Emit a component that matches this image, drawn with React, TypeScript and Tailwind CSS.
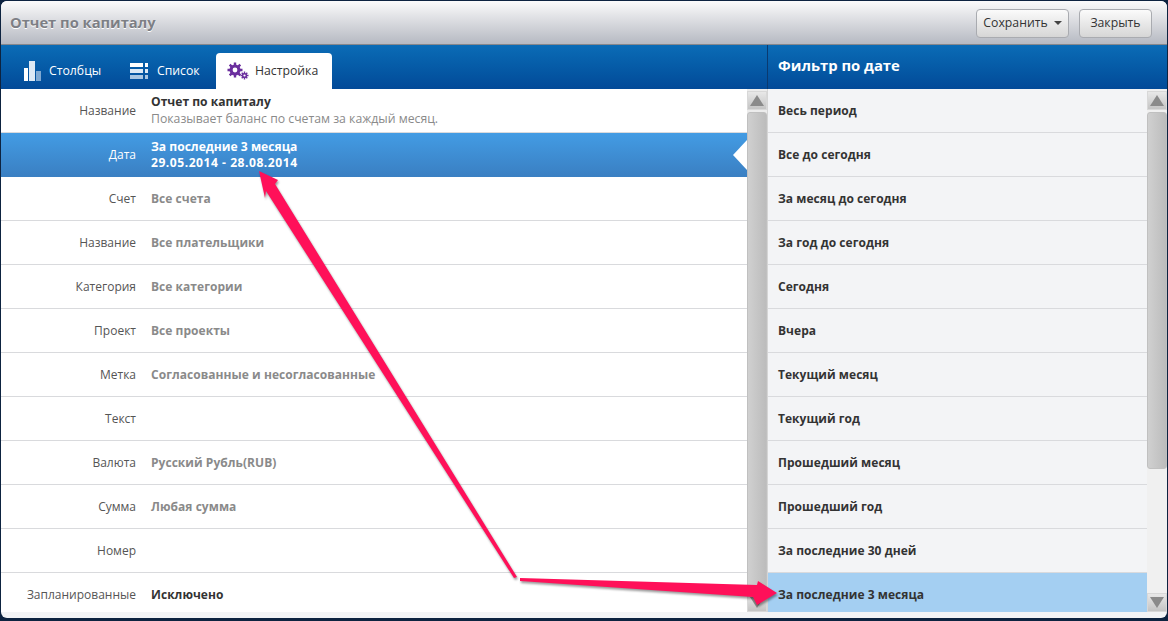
const leftRows = [
  { label: 'Счет', value: 'Все счета' },
  { label: 'Название', value: 'Все плательщики' },
  { label: 'Категория', value: 'Все категории' },
  { label: 'Проект', value: 'Все проекты' },
  { label: 'Метка', value: 'Согласованные и несогласованные' },
  { label: 'Текст', value: '' },
  { label: 'Валюта', value: 'Русский Рубль(RUB)' },
  { label: 'Сумма', value: 'Любая сумма' },
  { label: 'Номер', value: '' },
];

const rightRows = [
  'Весь период',
  'Все до сегодня',
  'За месяц до сегодня',
  'За год до сегодня',
  'Сегодня',
  'Вчера',
  'Текущий месяц',
  'Текущий год',
  'Прошедший месяц',
  'Прошедший год',
  'За последние 30 дней',
];

function ScrollArrow({ down }: { down?: boolean }) {
  return (
    <div className="h-[19px] flex items-center justify-center bg-gradient-to-b from-[#e8e8e8] to-[#c4c4c4] border border-[#d8d8d8]">
      <svg width="14" height="11" viewBox="0 0 14 11">
        <path d={down ? 'M0 0H14L7 11Z' : 'M7 0L14 11H0Z'} fill="#8a8a8a" />
      </svg>
    </div>
  );
}

function Gears() {
  return (
    <svg width="22" height="18" viewBox="0 0 22 18">
      <g fill="#6b2f9e">
        <circle cx="8" cy="8" r="5.5" />
        <g stroke="#6b2f9e" strokeWidth="2.4">
          <path d="M8 0.5V15.5M0.5 8H15.5M2.7 2.7L13.3 13.3M13.3 2.7L2.7 13.3" />
        </g>
        <circle cx="17.5" cy="13.5" r="2.6" />
        <g stroke="#6b2f9e" strokeWidth="1.4">
          <path d="M17.5 9.5V17.5M13.5 13.5H21.5M14.7 10.7L20.3 16.3M20.3 10.7L14.7 16.3" />
        </g>
      </g>
      <circle cx="8" cy="8" r="2.4" fill="#fff" />
      <circle cx="17.5" cy="13.5" r="1.1" fill="#fff" />
    </svg>
  );
}

export default function App() {
  return (
    <div className="w-[1168px] h-[621px] overflow-hidden relative bg-[#0d2340] p-[1px] pb-[3px] text-[12.25px] font-['Open_Sans','Noto_Sans',sans-serif]">
      <div className="h-full flex flex-col rounded-[6px] overflow-hidden bg-[#f3f4f6]">
        {/* Title bar */}
        <div className="h-[44px] shrink-0 flex items-center justify-between pl-[9px] pr-[15px] bg-gradient-to-b from-[#fbfbfb] to-[#b6b9c2] border-b border-[#85878c]">
          <h1 className="text-[14.7px] font-bold text-[#7d7f85] [text-shadow:0_1px_0_#fff]">Отчет по капиталу</h1>
          <div className="flex items-center gap-[10px] pt-[1px]">
            <button className="h-[29px] w-[93px] flex items-center justify-center gap-[6px] rounded-[4px] border border-[#a9abb0] bg-gradient-to-b from-[#fbfbfb] to-[#d6d6d6] text-[#333]">
              Сохранить
              <span className="w-0 h-0 border-x-[4px] border-x-transparent border-t-[4px] border-t-[#444]" />
            </button>
            <button className="h-[29px] w-[73px] rounded-[4px] border border-[#a9abb0] bg-gradient-to-b from-[#fbfbfb] to-[#d6d6d6] text-[#333]">
              Закрыть
            </button>
          </div>
        </div>

        {/* Blue header strip */}
        <div className="h-[44px] shrink-0 flex bg-gradient-to-b from-[#0b6cb6] to-[#034a98]">
          <div className="w-[767px] flex items-end pl-[8px] border-r border-[#0a3a70]">
            <div className="h-[36px] w-[106px] flex items-center gap-[8px] pl-[15px] text-white">
              <svg width="17" height="20" viewBox="0 0 17 20">
                <rect x="0" y="7" width="4" height="13" fill="#fff" />
                <rect x="5" y="0" width="6" height="20" fill="#dce9f5" />
                <rect x="12" y="10" width="5" height="10" fill="#7fa9d2" />
              </svg>
              Столбцы
            </div>
            <div className="h-[36px] w-[101px] flex items-center gap-[9px] pl-[15px] text-white">
              <svg width="18" height="16" viewBox="0 0 18 16">
                <rect x="0" y="0" width="13" height="4" fill="#fff" />
                <rect x="15" y="0" width="3" height="4" fill="#fff" />
                <rect x="0" y="6" width="13" height="4" fill="#dce9f5" />
                <rect x="15" y="6" width="3" height="4" fill="#dce9f5" />
                <rect x="0" y="12" width="13" height="4" fill="#a9c6e2" />
                <rect x="15" y="12" width="3" height="4" fill="#a9c6e2" />
              </svg>
              Список
            </div>
            <div className="h-[36px] w-[116px] flex items-center gap-[6px] pl-[11px] bg-white rounded-t-[4px] text-[#333]">
              <Gears />
              Настройка
            </div>
          </div>
          <div className="flex-1 flex items-center pl-[10px] pb-[4px] text-[14.8px] font-bold text-white">Фильтр по дате</div>
        </div>

        {/* Body */}
        <div className="flex-1 min-h-0 flex">
          {/* Settings list */}
          <div className="w-[767px] flex border-r border-[#d5d5d5]">
            <div className="w-[746px] min-w-0">
              <div className="h-[44px] flex items-center bg-white border-b border-[#d9dadd]">
                <span className="w-[135px] text-right text-[12px] text-[#555]">Название</span>
                <div className="pl-[15px] pb-[1px] leading-[17px]">
                  <div className="font-bold text-[#333] text-[12.1px]">Отчет по капиталу</div>
                  <div className="text-[#8a8a8a]">Показывает баланс по счетам за каждый месяц.</div>
                </div>
              </div>
              <div className="h-[44px] flex items-center bg-gradient-to-b from-[#439ce4] to-[#3a7fc2] relative">
                <span className="w-[135px] text-right text-[12px] text-white">Дата</span>
                <div className="pl-[15px] pb-[1px] leading-[16px] text-[12.1px] font-bold text-white">
                  <div>За последние 3 месяца</div>
                  <div className="tracking-[0.52px]">29.05.2014 - 28.08.2014</div>
                </div>
                <span className="absolute right-0 top-[7px] w-0 h-0 border-y-[15px] border-y-transparent border-r-[14px] border-r-white" />
              </div>
              {leftRows.map((row) => (
                <div key={row.label + row.value} className="h-[44px] flex items-center bg-white border-b border-[#d9dadd]">
                  <span className="w-[135px] text-right text-[12px] text-[#555]">{row.label}</span>
                  <span className="pl-[15px] text-[12px] tracking-[0.04px] font-bold text-[#8a8a8a]">{row.value}</span>
                </div>
              ))}
              <div className="h-[39px] flex items-center bg-white pt-[4px]">
                <span className="w-[135px] text-right text-[12px] text-[#555]">Запланированные</span>
                <span className="pl-[15px] text-[12px] tracking-[0.04px] font-bold text-[#333]">Исключено</span>
              </div>
            </div>
            <div className="w-[20px] pt-[2px] flex flex-col bg-[#ececec]">
              <ScrollArrow />
              <div className="flex-1 mt-[2px] bg-gradient-to-r from-[#d0d0d0] to-[#bcbcbc] rounded-[3px] border border-[#c0c0c0]" />
              <ScrollArrow down />
            </div>
          </div>

          {/* Date filter */}
          <div className="flex-1 min-w-0 flex">
            <div className="w-[379px] min-w-0">
              {rightRows.map((row) => (
                <div key={row} className="h-[44px] flex items-center pl-[10px] text-[12px] tracking-[0.04px] font-bold text-[#333] bg-[#f3f4f6] border-b border-[#d9dadd]">
                  {row}
                </div>
              ))}
              <div className="h-[39px] flex items-center pl-[10px] pt-[5px] text-[12px] tracking-[0.04px] font-bold text-[#333] bg-[#a4cff2]">
                За последние 3 месяца
              </div>
            </div>
            <div className="w-[20px] pt-[2px] flex flex-col bg-[#f0f0f0]">
              <ScrollArrow />
              <div className="h-[357px] mt-[2px] bg-gradient-to-r from-[#d0d0d0] to-[#bcbcbc] rounded-[3px] border border-[#c0c0c0]" />
              <div className="flex-1" />
              <ScrollArrow down />
            </div>
          </div>
        </div>
        <div className="h-[6px] shrink-0" />
      </div>

      {/* Annotation arrows */}
      <svg className="absolute inset-0 pointer-events-none [filter:drop-shadow(1px_2px_1px_rgba(0,0,0,0.4))]" width="1168" height="621" viewBox="0 0 1168 621">
        <path d="M259 171L278 180L275 184L517 577L514 578L266 191L265 198Z" fill="#ff1059" />
        <path d="M520 578L757 585L758 581L777 593L757 605L753 597L520 581Z" fill="#ff1059" />
      </svg>
    </div>
  );
}
